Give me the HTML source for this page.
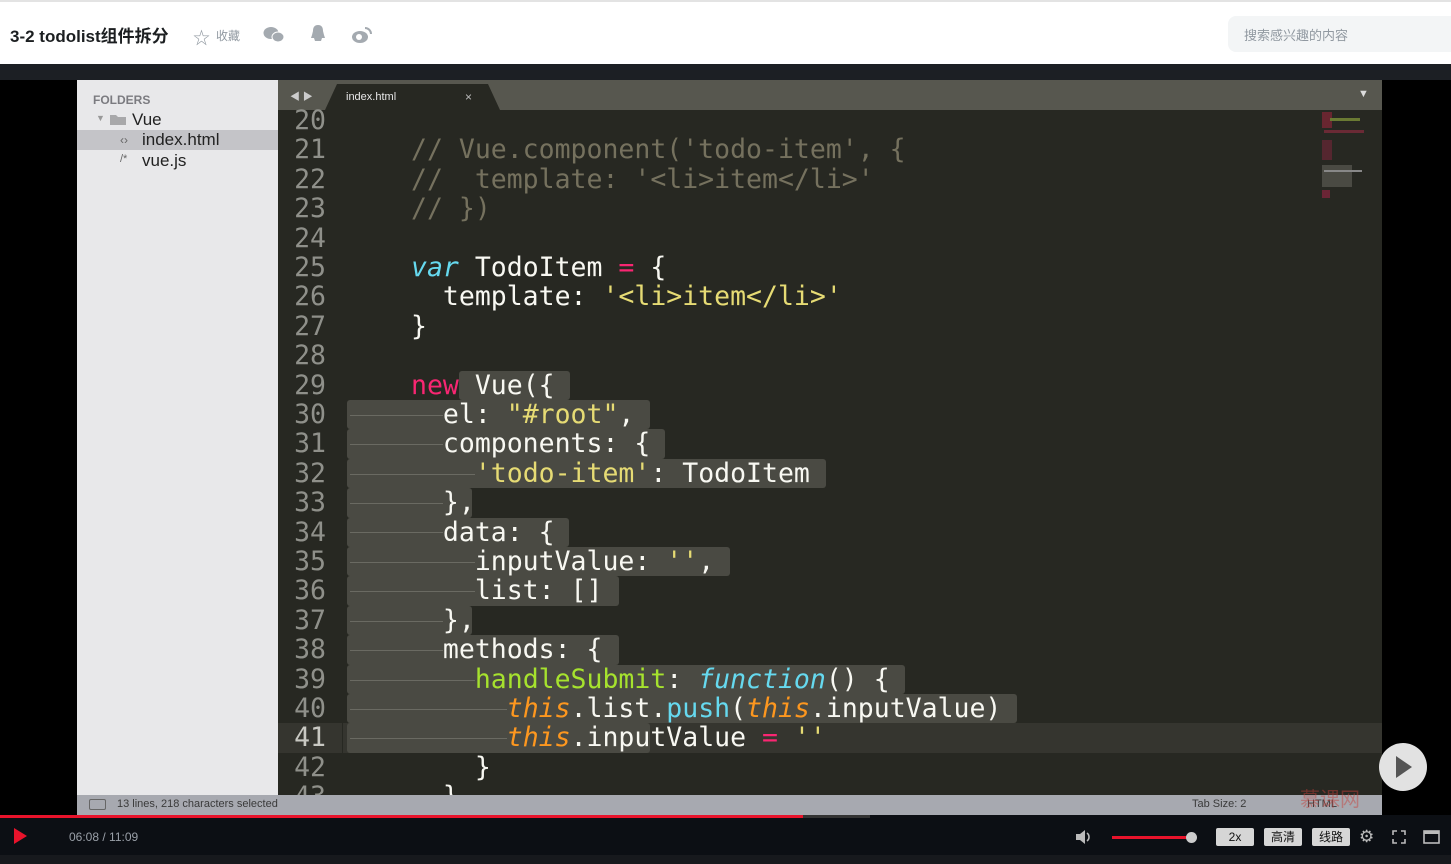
<!DOCTYPE html>
<html><head><meta charset="utf-8">
<style>
*{margin:0;padding:0;box-sizing:border-box}
body{width:1451px;height:864px;overflow:hidden;background:#000;position:relative;font-family:"Liberation Sans","Noto Sans CJK SC",sans-serif}
.abs{position:absolute}
#hdr{left:0;top:0;width:1451px;height:64px;background:#fff;border-top:2px solid #e3e3e3}
.code{font-family:"DejaVu Sans Mono","Liberation Mono",monospace;font-size:26.5px;color:#f8f8f2;white-space:pre;line-height:29.4px;height:29.4px;letter-spacing:0}
.ln{left:278px;width:48px;text-align:right;color:#8f908a}
.sel{background:#4a4a43;height:29.4px;border-radius:3px}
.c{color:#75715e}.k{color:#f92672}.v{color:#66d9ef;font-style:italic}.s{color:#e6db74}.g{color:#a6e22e}.t{color:#fd971f;font-style:italic}.b{color:#66d9ef}
.btn{top:828px;height:18px;background:#d6d6d6;border-radius:2px;color:#111;font-size:12px;text-align:center;line-height:18px}
.gd{height:1px;background:#6a6a62}
</style></head><body>
<div id="hdr" class="abs">
<div class="abs" style="left:10px;top:20px;font-size:17px;font-weight:bold;color:#1c1f21">3-2 todolist组件拆分</div>
<div class="abs" style="left:193px;top:22px;font-size:17px;color:#9199a1">☆</div>
<div class="abs" style="left:216px;top:25px;font-size:12px;color:#9199a1">收藏</div>
<svg class="abs" style="left:263px;top:24px" width="22" height="18"><ellipse cx="8" cy="7" rx="7.5" ry="6" fill="#a4aab0"/><ellipse cx="15" cy="11" rx="6" ry="5" fill="#a4aab0" stroke="#fff" stroke-width="1"/></svg>
<svg class="abs" style="left:309px;top:22px" width="18" height="20"><path d="M9 1C5 1 4 4 4 7L3 11 2 14 5 14 6 17 12 17 13 14 16 14 15 11 14 7C14 4 13 1 9 1Z" fill="#a4aab0"/></svg>
<svg class="abs" style="left:351px;top:24px" width="22" height="18"><ellipse cx="9" cy="11" rx="8" ry="6" fill="#a4aab0"/><circle cx="8" cy="11" r="3" fill="#fff"/><path d="M14 2a6 6 0 0 1 6 6" stroke="#a4aab0" stroke-width="2" fill="none"/></svg>
<div class="abs" style="left:1228px;top:14px;width:240px;height:36px;background:#f3f5f6;border-radius:8px"></div>
<div class="abs" style="left:1244px;top:23px;font-size:13px;color:#9199a1">搜索感兴趣的内容</div>
</div>
<div class="abs" style="left:0;top:64px;width:1451px;height:16px;background:#1c1f24"></div>
<!-- sidebar -->
<div class="abs" style="left:77px;top:80px;width:201px;height:715px;background:#e8e8ea"></div>
<div class="abs" style="left:93px;top:93px;font-size:12px;font-weight:bold;color:#7b7b80">FOLDERS</div>
<div class="abs" style="left:96px;top:113px;font-size:9px;color:#999">▼</div>
<svg class="abs" style="left:109px;top:113px" width="18" height="13"><path d="M1 2h6l2 2h8v8H1z" fill="#a8a8aa"/></svg>
<div class="abs" style="left:132px;top:110px;font-size:17px;color:#222">Vue</div>
<div class="abs" style="left:77px;top:130px;width:201px;height:20px;background:#c4c4c8"></div>
<div class="abs" style="left:120px;top:133px;font-size:12px;color:#666">‹›</div>
<div class="abs" style="left:142px;top:130px;font-size:17px;color:#222">index.html</div>
<div class="abs" style="left:120px;top:153px;font-size:11px;color:#666">/*</div>
<div class="abs" style="left:142px;top:151px;font-size:17px;color:#222">vue.js</div>
<!-- editor -->
<div class="abs" style="left:278px;top:80px;width:1104px;height:715px;background:#272822"></div>
<div class="abs" style="left:278px;top:80px;width:1104px;height:30px;background:#57574f"></div>
<div class="abs" style="left:290px;top:88px;font-size:10px;color:#ccc">◀ ▶</div>
<svg class="abs" style="left:325px;top:84px" width="175" height="26"><path d="M0 26L12 0H163L175 26Z" fill="#272822"/></svg>
<div class="abs" style="left:346px;top:91px;font-size:11px;color:#e8e8e8">index.html</div>
<div class="abs" style="left:465px;top:90px;font-size:12px;color:#bbb">×</div>
<div class="abs" style="left:1358px;top:88px;font-size:11px;color:#ddd">▼</div>
<!-- minimap -->
<div class="abs" style="left:1322px;top:112px;width:10px;height:16px;background:#7a2535;opacity:.8"></div>
<div class="abs" style="left:1330px;top:118px;width:30px;height:3px;background:#6a7a33"></div>
<div class="abs" style="left:1324px;top:130px;width:40px;height:3px;background:#6a2a35"></div>
<div class="abs" style="left:1322px;top:140px;width:10px;height:20px;background:#6a2535;opacity:.7"></div>
<div class="abs" style="left:1322px;top:165px;width:30px;height:22px;background:#4a4a43"></div>
<div class="abs" style="left:1324px;top:170px;width:38px;height:2px;background:#888"></div>
<div class="abs" style="left:1322px;top:190px;width:8px;height:8px;background:#6a2535"></div>
<!-- current line -->
<div class="abs" style="left:343px;top:723.4px;width:1039px;height:29.4px;background:#35352f"></div>
<div class="abs" style="left:278px;top:723.4px;width:64px;height:29.4px;background:#35352f"></div>
<!-- selections -->
<div class="abs sel" style="left:459px;top:370.6px;width:111px"></div>
<div class="abs sel" style="left:347px;top:400px;width:303px"></div>
<div class="abs sel" style="left:347px;top:429.4px;width:318px"></div>
<div class="abs sel" style="left:347px;top:458.8px;width:479px"></div>
<div class="abs sel" style="left:347px;top:488.2px;width:125px"></div>
<div class="abs sel" style="left:347px;top:517.6px;width:222px"></div>
<div class="abs sel" style="left:347px;top:547px;width:383px"></div>
<div class="abs sel" style="left:347px;top:576.4px;width:272px"></div>
<div class="abs sel" style="left:347px;top:605.8px;width:125px"></div>
<div class="abs sel" style="left:347px;top:635.2px;width:272px"></div>
<div class="abs sel" style="left:347px;top:664.6px;width:558px"></div>
<div class="abs sel" style="left:347px;top:694px;width:670px"></div>
<div class="abs sel" style="left:347px;top:723.4px;width:303px"></div>
<!-- indent guides -->
<div class="abs gd" style="left:350px;top:415px;width:93px"></div>
<div class="abs gd" style="left:350px;top:444px;width:93px"></div>
<div class="abs gd" style="left:350px;top:474px;width:125px"></div>
<div class="abs gd" style="left:350px;top:503px;width:93px"></div>
<div class="abs gd" style="left:350px;top:532px;width:93px"></div>
<div class="abs gd" style="left:350px;top:562px;width:125px"></div>
<div class="abs gd" style="left:350px;top:591px;width:125px"></div>
<div class="abs gd" style="left:350px;top:621px;width:93px"></div>
<div class="abs gd" style="left:350px;top:650px;width:93px"></div>
<div class="abs gd" style="left:350px;top:680px;width:125px"></div>
<div class="abs gd" style="left:350px;top:709px;width:157px"></div>
<div class="abs gd" style="left:350px;top:738px;width:157px"></div>
<!-- line numbers -->
<div class="abs code ln" style="top:106px">20</div>
<div class="abs code ln" style="top:135.4px">21</div>
<div class="abs code ln" style="top:164.8px">22</div>
<div class="abs code ln" style="top:194.2px">23</div>
<div class="abs code ln" style="top:223.6px">24</div>
<div class="abs code ln" style="top:253px">25</div>
<div class="abs code ln" style="top:282.4px">26</div>
<div class="abs code ln" style="top:311.8px">27</div>
<div class="abs code ln" style="top:341.2px">28</div>
<div class="abs code ln" style="top:370.6px">29</div>
<div class="abs code ln" style="top:400px">30</div>
<div class="abs code ln" style="top:429.4px">31</div>
<div class="abs code ln" style="top:458.8px">32</div>
<div class="abs code ln" style="top:488.2px">33</div>
<div class="abs code ln" style="top:517.6px">34</div>
<div class="abs code ln" style="top:547px">35</div>
<div class="abs code ln" style="top:576.4px">36</div>
<div class="abs code ln" style="top:605.8px">37</div>
<div class="abs code ln" style="top:635.2px">38</div>
<div class="abs code ln" style="top:664.6px">39</div>
<div class="abs code ln" style="top:694px">40</div>
<div class="abs code ln" style="top:723.4px;color:#c8c8c2">41</div>
<div class="abs code ln" style="top:752.8px">42</div>
<div class="abs code ln" style="top:782.2px">43</div>
<!-- code -->
<div class="abs code" style="left:411px;top:135.4px"><span class="c">// Vue.component('todo-item', {</span></div>
<div class="abs code" style="left:411px;top:164.8px"><span class="c">//  template: '&lt;li&gt;item&lt;/li&gt;'</span></div>
<div class="abs code" style="left:411px;top:194.2px"><span class="c">// })</span></div>
<div class="abs code" style="left:411px;top:253px"><span class="v">var</span> TodoItem <span class="k">=</span> {</div>
<div class="abs code" style="left:411px;top:282.4px">  template: <span class="s">'&lt;li&gt;item&lt;/li&gt;'</span></div>
<div class="abs code" style="left:411px;top:311.8px">}</div>
<div class="abs code" style="left:411px;top:370.6px"><span class="k">new</span> Vue({</div>
<div class="abs code" style="left:411px;top:400px">  el: <span class="s">"#root"</span>,</div>
<div class="abs code" style="left:411px;top:429.4px">  components: {</div>
<div class="abs code" style="left:411px;top:458.8px">    <span class="s">'todo-item'</span>: TodoItem</div>
<div class="abs code" style="left:411px;top:488.2px">  },</div>
<div class="abs code" style="left:411px;top:517.6px">  data: {</div>
<div class="abs code" style="left:411px;top:547px">    inputValue: <span class="s">''</span>,</div>
<div class="abs code" style="left:411px;top:576.4px">    list: []</div>
<div class="abs code" style="left:411px;top:605.8px">  },</div>
<div class="abs code" style="left:411px;top:635.2px">  methods: {</div>
<div class="abs code" style="left:411px;top:664.6px">    <span class="g">handleSubmit</span>: <span class="v">function</span>() {</div>
<div class="abs code" style="left:411px;top:694px">      <span class="t">this</span>.list.<span class="b">push</span>(<span class="t">this</span>.inputValue)</div>
<div class="abs code" style="left:411px;top:723.4px">      <span class="t">this</span>.inputValue <span class="k">=</span> <span class="s">''</span></div>
<div class="abs code" style="left:411px;top:752.8px">    }</div>
<div class="abs code" style="left:411px;top:782.2px">  }</div>
<!-- status bar -->
<div class="abs" style="left:77px;top:795px;width:1305px;height:20px;background:#a7a9b0"></div>
<div class="abs" style="left:89px;top:799px;width:17px;height:11px;border:1.5px solid #666;border-radius:2px"></div>
<div class="abs" style="left:117px;top:798px;font-size:11px;color:#3a3a3a">13 lines, 218 characters selected</div>
<div class="abs" style="left:1192px;top:798px;font-size:11px;color:#3a3a3a">Tab Size: 2</div>
<div class="abs" style="left:1307px;top:798px;font-size:11px;color:#3a3a3a">HTML</div>
<div class="abs" style="left:1300px;top:783px;font-size:20px;color:#c8403a;opacity:.45">慕课网</div>
<!-- play circle -->
<div class="abs" style="left:1379px;top:743px;width:48px;height:48px;border-radius:50%;background:#e2e2e2"></div>
<svg class="abs" style="left:1395px;top:755px" width="18" height="24"><path d="M1 1L17 12 1 23Z" fill="#555"/></svg>
<!-- controls -->
<div class="abs" style="left:0;top:815px;width:1451px;height:40px;background:#0c0f14"></div>
<div class="abs" style="left:0;top:855px;width:1451px;height:9px;background:#17191d"></div>
<div class="abs" style="left:0;top:815px;width:803px;height:3px;background:#e8132b"></div>
<div class="abs" style="left:803px;top:815px;width:67px;height:3px;background:#333"></div>
<svg class="abs" style="left:14px;top:828px" width="14" height="16"><path d="M0 0L13 8 0 16Z" fill="#e8132b"/></svg>
<div class="abs" style="left:69px;top:830px;font-size:12px;color:#9aa0a8">06:08 / 11:09</div>
<svg class="abs" style="left:1075px;top:830px" width="16" height="14"><path d="M1 4h4l5-4v14l-5-4H1z" fill="#bbb"/><path d="M12 3a5 5 0 0 1 0 8" stroke="#bbb" stroke-width="1.6" fill="none"/></svg>
<div class="abs" style="left:1112px;top:836px;width:78px;height:3px;background:#e8132b"></div>
<div class="abs" style="left:1186px;top:832px;width:11px;height:11px;border-radius:50%;background:#ccc"></div>
<div class="abs btn" style="left:1216px;width:38px">2x</div>
<div class="abs btn" style="left:1264px;width:38px">高清</div>
<div class="abs btn" style="left:1312px;width:38px">线路</div>
<div class="abs" style="left:1359px;top:827px;font-size:17px;color:#bbb">⚙</div>
<svg class="abs" style="left:1392px;top:830px" width="14" height="14"><path d="M1 5V1h4M9 1h4v4M13 9v4H9M5 13H1V9" stroke="#bbb" stroke-width="1.6" fill="none"/></svg>
<svg class="abs" style="left:1423px;top:830px" width="17" height="14"><rect x="1" y="1" width="15" height="12" stroke="#bbb" stroke-width="1.6" fill="none"/><rect x="1" y="1" width="15" height="3" fill="#bbb"/></svg>
</body></html>
